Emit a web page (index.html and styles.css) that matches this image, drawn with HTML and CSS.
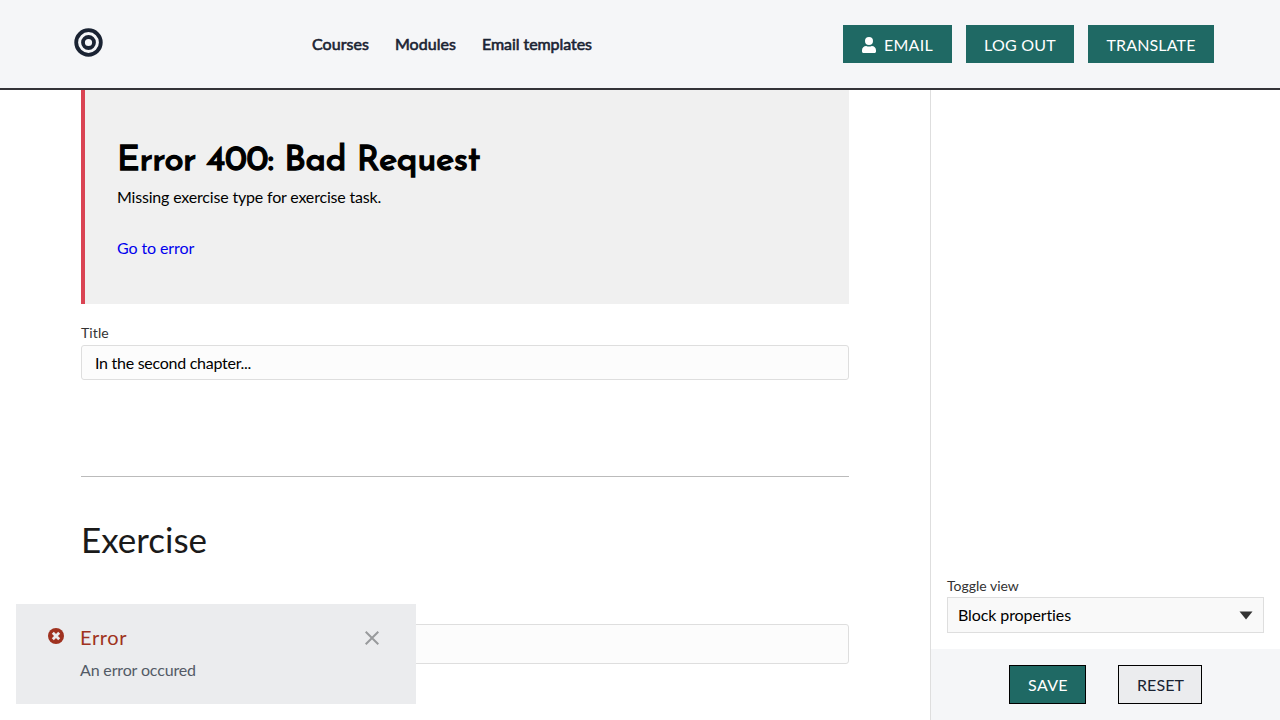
FILE: index.html
```html
<!DOCTYPE html>
<html lang="en">
<head>
<meta charset="utf-8">
<title>Edit page</title>
<link rel="stylesheet" href="styles.css">
</head>
<body>
<div class="app">
  <header class="header">
    <a class="logo" aria-label="Home"><svg width="30" height="30" viewBox="0 0 30 30" fill="none" stroke="#1a2333"><circle cx="15.5" cy="15.5" r="12.3" stroke-width="3.8"/><circle cx="15.5" cy="15.5" r="5.5" stroke-width="3.8"/></svg></a>
    <nav class="nav"><a>Courses</a><a>Modules</a><a class="nav-email">Email templates</a></nav>
    <div class="actions">
      <button class="button button-email"><svg class="user-icon" width="14" height="16" viewBox="0 0 448 512" fill="#fff"><path d="M224 256a128 128 0 1 0 0-256 128 128 0 1 0 0 256zM314 288c-28 12-58 19-90 19s-62-7-90-19C60 288 0 348 0 422v42c0 26 22 48 48 48h352c26 0 48-22 48-48v-42c0-74-60-134-134-134z"/></svg><span>Email</span></button>
      <button class="button button-logout">Log out</button>
      <button class="button button-translate">Translate</button>
    </div>
  </header>
  <div class="body">
    <main class="editor">
      <section class="alert">
        <h2 class="alert-title">Error 400: Bad Request</h2>
        <p class="alert-text">Missing exercise type for exercise task.</p>
        <a class="alert-link">Go to error</a>
      </section>
      <label class="label title-label" for="title">Title</label>
      <input class="input" id="title" value="In the second chapter...">
      <hr class="divider">
      <h1 class="exercise-title">Exercise</h1>
      <input class="input exercise-input" aria-label="Exercise name">
    </main>
    <aside class="sidebar">
      <div class="view-switch">
        <div class="label">Toggle view</div>
        <div class="select"><span>Block properties</span><svg width="14" height="9" viewBox="0 0 14 9"><path d="M0.5 0.5H13.5L7 8.5z" fill="#333"/></svg></div>
      </div>
      <div class="footer">
        <button class="button button-save">Save</button>
        <button class="button button-reset">Reset</button>
      </div>
    </aside>
  </div>
  <div class="toast">
    <svg class="toast-icon" width="16" height="16" viewBox="0 0 16 16"><circle cx="8" cy="8" r="8" fill="#9f3220"/><path d="M5.8 5.8l4.4 4.4M10.2 5.8l-4.4 4.4" stroke="#ebecee" stroke-width="2.8" stroke-linecap="square"/></svg>
    <div class="toast-content"><div class="toast-title">Error</div><div class="toast-text">An error occured</div></div>
    <svg class="toast-close" width="14" height="14" viewBox="0 0 14 14"><path d="M.7.7l12.6 12.6M13.3.7L.7 13.3" stroke="#989a9c" stroke-width="2"/></svg>
  </div>
</div>
</body>
</html>
```
FILE: styles.css
```css
* { box-sizing: border-box; }
body { margin: 0; font: 16px/24px Lato, sans-serif; font-variant-ligatures: none; color: #000; background: #fff; }
h1, h2, p { margin: 0; }
.app { position: relative; display: flex; flex-direction: column; height: 720px; overflow: hidden; }
.header { display: flex; align-items: flex-start; height: 90px; flex: none; background: #f5f6f8; border-bottom: 2px solid #333338; }
.logo { margin: 27px 0 0 73px; width: 30px; height: 30px; }
.logo svg { display: block; }
.nav { display: flex; gap: 26px; margin: 32px 0 0 209px; color: #1a2333; -webkit-text-stroke: 0.6px #1a2333; letter-spacing: 0.05px; white-space: nowrap; }
.nav-email { letter-spacing: -0.06px; }
.actions { display: flex; gap: 14px; margin: 25px 66px 0 auto; }
.button { display: flex; align-items: center; justify-content: center; height: 38px; padding: 2px 0 0; border: 0; background: #1f6964; color: #fff; font: 16px/20px Lato, sans-serif; letter-spacing: 0.32px; text-transform: uppercase; }
.button-email { width: 109px; gap: 8px; }
.user-icon { flex: none; }
.button-logout { width: 108px; letter-spacing: 0.25px; }
.button-translate { width: 126px; letter-spacing: 0.15px; }
.body { display: flex; flex: 1; min-height: 0; }
.editor { display: flex; flex-direction: column; width: 930px; padding: 0 81px; }
.alert { flex: none; height: 214px; padding: 47px 32px 0; background: #f0f0f0; border-left: 4px solid #da4453; }
.alert-title { height: 48px; padding-top: 2px; font: 400 35px/46px "Josefin Sans", Lato, sans-serif; letter-spacing: -0.37px; -webkit-text-stroke: 1.3px #000; white-space: nowrap; }
.alert-text { margin-bottom: 27px; letter-spacing: -0.18px; }
.alert-link { color: #0000ee; letter-spacing: -0.1px; }
.label { font-size: 14px; line-height: 20px; color: #333; }
.title-label { margin: 19px 0 2px; letter-spacing: 0.1px; }
.input { flex: none; width: 100%; height: 35px; padding: 0 13px; border: 1px solid #dedede; border-radius: 3px; background: #fcfcfc; font: 16px/20px Lato, sans-serif; letter-spacing: -0.27px; color: #000; }
.divider { width: 100%; height: 1px; flex: none; margin: 96px 0 0; border: 0; background: #bbb; }
.exercise-title { margin: 39px 0 61px; font-size: 35px; line-height: 47px; font-weight: 400; color: #1a1a1a; }
.exercise-input { height: 40px; }
.sidebar { display: flex; flex-direction: column; justify-content: flex-end; width: 350px; border-left: 1px solid #dedede; }
.view-switch { padding: 0 16px 16px; }
.select { display: flex; align-items: center; justify-content: space-between; height: 36px; margin-top: 1px; padding: 0 10px; border: 1px solid #dedede; background: #f9f9f9; letter-spacing: -0.1px; }
.footer { display: flex; justify-content: center; gap: 32px; height: 71px; padding-top: 16px; background: #f5f6f8; }
.button-save, .button-reset { height: 39px; padding: 1px 0 0 1px; border: 1px solid #000; }
.button-save { width: 77px; }
.button-reset { width: 84px; background: #ebecee; color: #1a2333; letter-spacing: 0.1px; }
.toast { position: absolute; left: 16px; bottom: 16px; display: flex; width: 400px; height: 100px; padding: 24px 37px 0 32px; background: #ebecee; }
.toast-content { flex: 1; margin: -4px 0 0 16px; }
.toast-title { font-size: 20px; line-height: 26px; letter-spacing: 0.65px; color: #9f3220; }
.toast-text { margin-top: 8px; letter-spacing: -0.15px; color: #535a66; }
.toast-close { margin-top: 3px; }
```
